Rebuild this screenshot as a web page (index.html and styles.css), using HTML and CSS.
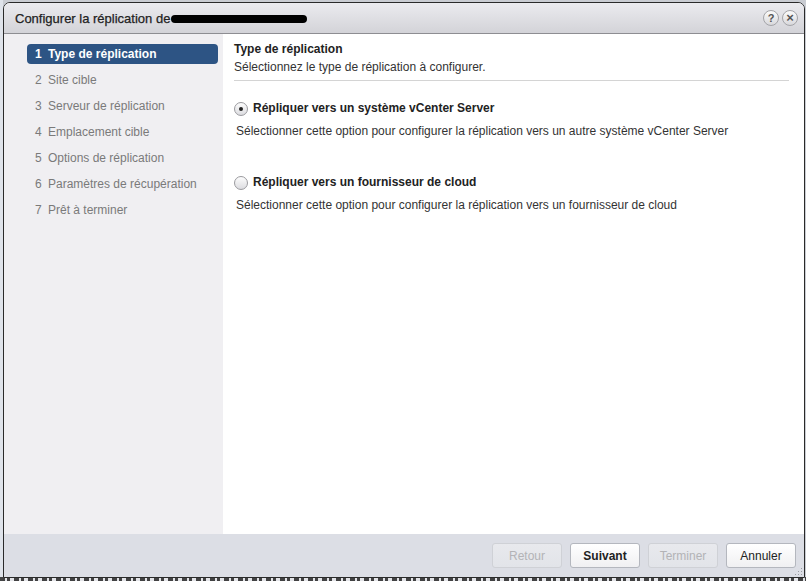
FILE: index.html
```html
<!DOCTYPE html>
<html lang="fr">
<head>
    <meta charset="UTF-8">
    <title>Configurer la réplication</title>
    <link rel="stylesheet" href="styles.css">
</head>
<body>
    <div class="backdrop">
        <div class="backdrop-row"></div>
    </div>

    <div class="dialog">
        <div class="title-bar">
            <span class="title">Configurer la réplication de</span><span class="redacted"></span>
            <div class="title-icons">
                <span class="round-btn">?</span>
                <span class="round-btn close">&times;</span>
            </div>
        </div>

        <div class="dialog-body">
            <ul class="steps">
                <li class="step active"><span class="num">1</span>Type de réplication</li>
                <li class="step"><span class="num">2</span>Site cible</li>
                <li class="step"><span class="num">3</span>Serveur de réplication</li>
                <li class="step"><span class="num">4</span>Emplacement cible</li>
                <li class="step"><span class="num">5</span>Options de réplication</li>
                <li class="step"><span class="num">6</span>Paramètres de récupération</li>
                <li class="step"><span class="num">7</span>Prêt à terminer</li>
            </ul>

            <div class="content">
                <div class="page-head">
                    <h2>Type de réplication</h2>
                    <p>Sélectionnez le type de réplication à configurer.</p>
                </div>

                <div class="option">
                    <label class="radio-label"><span class="radio checked"></span>Répliquer vers un système vCenter Server</label>
                    <p class="option-desc">Sélectionner cette option pour configurer la réplication vers un autre système vCenter Server</p>
                </div>

                <div class="option">
                    <label class="radio-label"><span class="radio"></span>Répliquer vers un fournisseur de cloud</label>
                    <p class="option-desc">Sélectionner cette option pour configurer la réplication vers un fournisseur de cloud</p>
                </div>
            </div>
        </div>

        <div class="footer">
            <button class="btn" disabled>Retour</button>
            <button class="btn primary">Suivant</button>
            <button class="btn" disabled>Terminer</button>
            <button class="btn">Annuler</button>
            <span class="grip"></span>
        </div>
    </div>
</body>
</html>
```

FILE: styles.css
```css
body {
    margin: 0;
    font-family: "Liberation Sans", Arial, sans-serif;
    font-size: 12px;
    background: #c9ccd2;
    width: 806px;
    height: 581px;
    overflow: hidden;
    position: relative;
}

/* page behind the dialog */
.backdrop {
    height: 581px;
    display: flex;
    flex-direction: column;
    justify-content: flex-end;
    background: linear-gradient(90deg, #dfe3ea 0, #dfe3ea 3px, #c9ccd2 3px);
}

.backdrop-row {
    height: 4px;
    background:
        repeating-linear-gradient(90deg, #2b2b2b 0 5px, #e8e9ec 5px 7px, #2b2b2b 7px 10px, #e8e9ec 10px 14px),
        #e8e9ec;
    opacity: 0.85;
}

/* Dialog */
.dialog {
    position: absolute;
    top: 2px;
    left: 3px;
    width: 800px;
    height: 574px;
    border: 1px solid #2a2a2a;
    border-radius: 7px 7px 0 0;
    display: flex;
    flex-direction: column;
    overflow: hidden;
    background: #fff;
}

.title-bar {
    height: 30px;
    flex-shrink: 0;
    display: flex;
    align-items: center;
    padding-left: 11px;
    background: linear-gradient(#ebebef, #d3d3d8);
    border-bottom: 1px solid #8d8d92;
}

.title {
    font-size: 13px;
    color: #222;
    -webkit-text-stroke: 0.25px #222;
}

.redacted {
    display: inline-block;
    width: 136px;
    height: 8px;
    margin-left: 1px;
    margin-top: 2px;
    background: #000;
    border-radius: 4px;
}

.title-icons {
    margin-left: auto;
    margin-right: 6px;
    display: flex;
    gap: 3px;
}

.round-btn {
    width: 14px;
    height: 14px;
    border: 1px solid #a4a4a8;
    border-radius: 50%;
    background: linear-gradient(#fbfbfb, #d8d8dc);
    color: #555;
    font-weight: bold;
    font-size: 11px;
    line-height: 14px;
    text-align: center;
}

.round-btn.close {
    font-size: 13px;
}

.dialog-body {
    flex: 1;
    display: flex;
    min-height: 0;
}

/* Step list */
.steps {
    list-style: none;
    margin: 0;
    padding: 10px 5px 0 23px;
    width: 191px;
    background: #f0eff2;
}

.step {
    height: 20px;
    line-height: 20px;
    margin-bottom: 6px;
    padding-left: 8px;
    color: #7a7a7a;
    font-size: 12px;
    border-radius: 4px;
}

.step .num {
    display: inline-block;
    width: 13px;
}

.step.active {
    background: #2d5484;
    color: #fff;
    font-weight: bold;
}

/* Content */
.content {
    flex: 1;
    padding: 8px 15px 0 11px;
}

.page-head {
    border-bottom: 1px solid #d4d4d4;
    padding-bottom: 5px;
}

.page-head h2 {
    margin: 0;
    font-size: 12px;
    font-weight: bold;
    color: #222;
    line-height: 15px;
}

.page-head p {
    margin: 3px 0 0;
    color: #333;
    line-height: 15px;
}

.option {
    margin-top: 20px;
}

.option + .option {
    margin-top: 36px;
}

.radio-label {
    display: flex;
    align-items: center;
    font-weight: bold;
    color: #222;
    line-height: 15px;
}

.radio {
    width: 12px;
    height: 12px;
    border: 1px solid #9a9a9e;
    border-radius: 50%;
    background: linear-gradient(#fdfdfd, #dcdce0);
    margin-right: 5px;
    display: flex;
    align-items: center;
    justify-content: center;
}

.radio.checked::after {
    content: '';
    width: 4px;
    height: 4px;
    border-radius: 50%;
    background: #222;
}

.option-desc {
    margin: 8px 0 0 2px;
    color: #333;
    line-height: 15px;
}

/* Footer */
.footer {
    height: 43px;
    flex-shrink: 0;
    background: #dcdee5;
    display: flex;
    align-items: center;
    justify-content: flex-end;
    gap: 8px;
    padding-right: 8px;
    position: relative;
}

.btn {
    width: 70px;
    height: 25px;
    font-family: inherit;
    font-size: 12px;
    color: #222;
    border: 1px solid #b4b7be;
    border-radius: 3px;
    background: linear-gradient(#ffffff, #f0f0f2);
    padding: 0;
}

.btn.primary {
    font-weight: bold;
}

.btn:disabled {
    color: #b3b3b6;
    border-color: #cfd1d6;
    background: linear-gradient(#e8e9ed, #e2e4e9);
}

.grip {
    position: absolute;
    right: 2px;
    bottom: 2px;
    width: 8px;
    height: 8px;
    background: radial-gradient(circle, #9a9ca2 0.8px, transparent 1px) 0 0 / 3px 3px;
    clip-path: polygon(100% 0, 100% 100%, 0 100%);
}
```
